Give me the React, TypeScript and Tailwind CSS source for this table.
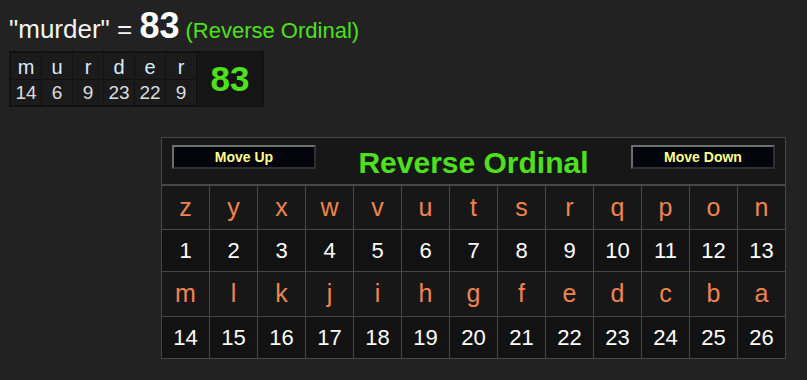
const word = "murder";
const rev = (c: string) => 26 - (c.charCodeAt(0) - 97);

const alphabet = "zyxwvutsrqponmlkjihgfedcba".split("");
const rows = [alphabet.slice(0, 13), alphabet.slice(13)];

const App = () => {
  const total = word.split("").reduce((s, c) => s + rev(c), 0);

  return (
    <div className="min-h-[380px] w-full bg-[#222222] text-white font-['Liberation_Sans',Arial,sans-serif]">
      {/* heading */}
      <div className="pl-[9px] flex items-baseline h-[42px] leading-none pt-[8px]">
        <span className="text-[26px] text-[#f4f4f4]">"{word}" =&nbsp;</span>
        <span className="text-[36px] font-bold">{total}</span>
        <span className="text-[22px] text-[#4ee01e] ml-[6px]">(Reverse Ordinal)</span>
      </div>

      {/* word breakdown */}
      <div className="ml-[9px] mt-[9px] flex w-fit bg-[#111111] p-px">
        <table className="border-collapse">
          <tbody>
            <tr>
              {word.split("").map((c, i) => (
                <td key={i} className="w-[31px] h-[27px] text-center text-[20px] leading-none text-[#d8ecff] bg-[#1b1b1b] border border-[#111111] pt-[2px]">
                  {c}
                </td>
              ))}
            </tr>
            <tr>
              {word.split("").map((c, i) => (
                <td key={i} className="w-[31px] h-[26px] text-center text-[19px] leading-none text-[#dedede] bg-[#1b1b1b] border border-[#111111]">
                  {rev(c)}
                </td>
              ))}
            </tr>
          </tbody>
        </table>
        <div className="w-[66px] flex items-center justify-center bg-[#151515] text-[#4ee01e] text-[35px] font-bold">
          {total}
        </div>
      </div>

      {/* cipher chart */}
      <div className="ml-[161px] mt-[30px] w-[625px]">
        <table className="border-collapse w-[625px] bg-[#161616]">
          <tbody>
            <tr>
              <td colSpan={13} className="border border-[#474747] border-b-2 h-[47px] bg-[#171717] align-top">
                <div className="flex items-start justify-between px-[10px] pt-[7px]">
                  <button className="w-[144px] h-[24px] bg-[#04040c] border-2 border-t-[#6e6e6e] border-l-[#6e6e6e] border-r-[#2f2f2f] border-b-[#2f2f2f] text-[#ffff8c] text-[14px] font-bold">
                    Move Up
                  </button>
                  <span className="text-[#4ee01e] text-[30px] font-bold leading-none pt-[3px]">Reverse Ordinal</span>
                  <button className="w-[144px] h-[24px] bg-[#04040c] border-2 border-t-[#6e6e6e] border-l-[#6e6e6e] border-r-[#2f2f2f] border-b-[#2f2f2f] text-[#ffff8c] text-[14px] font-bold">
                    Move Down
                  </button>
                </div>
              </td>
            </tr>
            {rows.map((r, ri) => [
              <tr key={"l" + ri}>
                {r.map((c) => (
                  <td key={c} className="w-[48px] h-[45px] text-center text-[25px] text-[#f0844e] border border-[#474747] bg-[#171717]">
                    {c}
                  </td>
                ))}
              </tr>,
              <tr key={"n" + ri}>
                {r.map((c) => (
                  <td key={c} className="w-[48px] h-[42px] text-center text-[22px] text-white border border-[#474747] bg-[#121212]">
                    {rev(c)}
                  </td>
                ))}
              </tr>,
            ])}
          </tbody>
        </table>
      </div>
    </div>
  );
};

export default App;
